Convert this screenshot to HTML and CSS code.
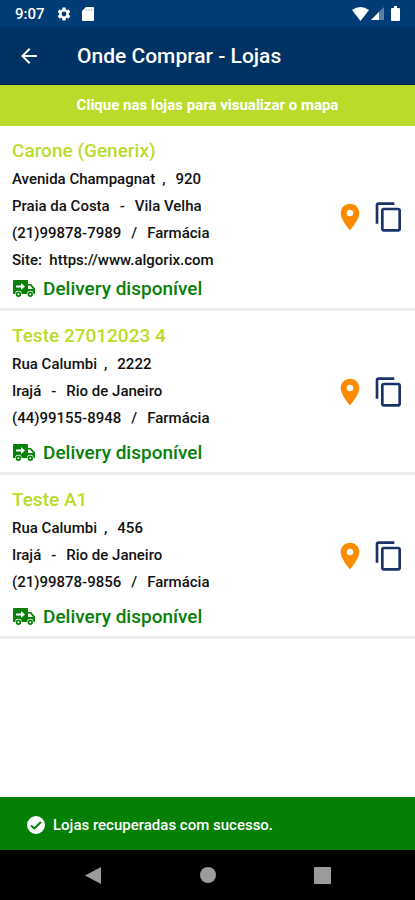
FILE: index.html
```html
<!DOCTYPE html>
<html lang="pt-BR">
<head>
<meta charset="utf-8">
<meta name="viewport" content="width=device-width, initial-scale=1">
<title>Onde Comprar - Lojas</title>
<link rel="stylesheet" href="styles.css">
</head>
<body>
<svg class="defs" aria-hidden="true">
  <symbol id="pin" viewBox="0 0 24 24"><path d="M12 2C8.130 2 5 5.130 5 9c0 5.250 7 13 7 13s7-7.750 7-13c0-3.870-3.130-7-7-7zm0 9.500a2.500 2.500 0 0 1 0-5 2.500 2.500 0 0 1 0 5z"/></symbol>
  <symbol id="copy" viewBox="0 0 24 24"><path d="M16 1H4c-1.100 0-2 .9-2 2v14h2V3h12V1zm3 4H8c-1.100 0-2 .9-2 2v14c0 1.100.9 2 2 2h11c1.100 0 2-.9 2-2V7c0-1.100-.9-2-2-2zm0 16H8V7h11v14z"/></symbol>
  <symbol id="truck" viewBox="0 0 24 20"><path fill-rule="evenodd" d="M2 1h13a1 1 0 0 1 1 1v3h3l4 4.500V15h-1.500a3.200 3.200 0 0 0-6.400 0H9.600a3.200 3.200 0 0 0-6.400 0H1V2a1 1 0 0 1 1-1zm14 5.500V10h5l-3-3.500zM9 4v2.500H4v2h5V11l4-3.500z"/><path fill-rule="evenodd" d="M6.400 12.500a2.700 2.700 0 1 1 0 5.400 2.700 2.700 0 0 1 0-5.400zm0 1.700a1 1 0 1 0 0 2 1 1 0 0 0 0-2zM18.300 12.500a2.700 2.700 0 1 1 0 5.400 2.700 2.700 0 0 1 0-5.400zm0 1.700a1 1 0 1 0 0 2 1 1 0 0 0 0-2z"/></symbol>
</svg>
<div class="screen">
  <div class="status">
    <span class="time">9:07</span>
    <svg class="gear" viewBox="0 0 24 24"><path d="M19.140 12.940c.04-.3.060-.61.060-.94 0-.32-.02-.64-.07-.94l2.030-1.580a.49.49 0 0 0 .12-.61l-1.920-3.320a.49.49 0 0 0-.59-.22l-2.390.96a7 7 0 0 0-1.620-.94l-.36-2.540a.48.48 0 0 0-.48-.41h-3.840a.48.48 0 0 0-.47.41l-.36 2.540c-.59.24-1.130.57-1.620.94l-2.390-.96a.48.48 0 0 0-.59.22L2.740 8.870a.48.48 0 0 0 .12.610l2.030 1.580c-.05.3-.09.630-.09.940s.02.640.07.940l-2.030 1.580a.49.49 0 0 0-.12.610l1.920 3.320c.12.220.37.290.59.220l2.390-.96c.5.380 1.030.7 1.620.94l.36 2.540c.05.240.24.410.48.410h3.840c.24 0 .44-.17.470-.41l.36-2.540c.59-.24 1.130-.56 1.620-.94l2.390.96c.22.080.47 0 .59-.22l1.920-3.320a.48.48 0 0 0-.12-.61zM12 15.600a3.600 3.600 0 1 1 0-7.200 3.600 3.600 0 0 1 0 7.200z"/></svg>
    <svg class="sd" viewBox="0 0 12 14"><path d="M4 0h7a1 1 0 0 1 1 1v12a1 1 0 0 1-1 1H1a1 1 0 0 1-1-1V4z"/><path class="slots" d="M4 2h1v2H4zM6.500 2h1v2h-1zM9 2h1v2H9z"/></svg>
    <span class="spacer"></span>
    <svg class="wifi" viewBox="0 0 17 14"><path d="M0 3Q8.500-3 17 3L8.500 14z"/></svg>
    <svg class="signal" viewBox="0 0 13 13"><path class="dim" d="M13 0v13H0z"/><path d="M8 5v8H0z"/></svg>
    <svg class="battery" viewBox="0 0 9 15"><path d="M3 0h3v2h2a1 1 0 0 1 1 1v11a1 1 0 0 1-1 1H1a1 1 0 0 1-1-1V3a1 1 0 0 1 1-1h2z"/></svg>
  </div>
  <header class="appbar">
    <button class="icon-button" type="button" aria-label="Voltar"><svg class="back" viewBox="0 0 24 24"><path d="M20 11H7.830l5.590-5.590L12 4l-8 8 8 8 1.410-1.410L7.830 13H20z"/></svg></button>
    <h1>Onde Comprar - Lojas</h1>
  </header>
  <p class="banner">Clique nas lojas para visualizar o mapa</p>
  <main>
    <article class="store">
      <div class="info">
        <h2>Carone (Generix)</h2>
        <p><span>Avenida Champagnat</span><span class="comma">,</span><span>920</span></p>
        <p><span>Praia da Costa</span><span class="sep">-</span><span>Vila Velha</span></p>
        <p><span>(21)99878-7989</span><span class="sep">/</span><span>Farmácia</span></p>
        <p>Site:&nbsp; https://www.algorix.com</p>
        <div class="delivery"><svg viewBox="0 0 24 20"><use href="#truck"/></svg>Delivery disponível</div>
      </div>
      <div class="actions">
        <button class="icon-button pin" type="button" aria-label="Ver no mapa"><svg><use href="#pin"/></svg></button>
        <button class="icon-button copy" type="button" aria-label="Copiar"><svg><use href="#copy"/></svg></button>
      </div>
    </article>
    <article class="store no-site">
      <div class="info">
        <h2>Teste 27012023 4</h2>
        <p><span>Rua Calumbi</span><span class="comma">,</span><span>2222</span></p>
        <p><span>Irajá</span><span class="sep">-</span><span>Rio de Janeiro</span></p>
        <p><span>(44)99155-8948</span><span class="sep">/</span><span>Farmácia</span></p>
        <div class="delivery"><svg viewBox="0 0 24 20"><use href="#truck"/></svg>Delivery disponível</div>
      </div>
      <div class="actions">
        <button class="icon-button pin" type="button" aria-label="Ver no mapa"><svg><use href="#pin"/></svg></button>
        <button class="icon-button copy" type="button" aria-label="Copiar"><svg><use href="#copy"/></svg></button>
      </div>
    </article>
    <article class="store no-site">
      <div class="info">
        <h2>Teste A1</h2>
        <p><span>Rua Calumbi</span><span class="comma">,</span><span>456</span></p>
        <p><span>Irajá</span><span class="sep">-</span><span>Rio de Janeiro</span></p>
        <p><span>(21)99878-9856</span><span class="sep">/</span><span>Farmácia</span></p>
        <div class="delivery"><svg viewBox="0 0 24 20"><use href="#truck"/></svg>Delivery disponível</div>
      </div>
      <div class="actions">
        <button class="icon-button pin" type="button" aria-label="Ver no mapa"><svg><use href="#pin"/></svg></button>
        <button class="icon-button copy" type="button" aria-label="Copiar"><svg><use href="#copy"/></svg></button>
      </div>
    </article>
  </main>
  <div class="toast" role="status">
    <svg viewBox="0 0 18 18"><circle cx="9" cy="9" r="9"/><path d="M4 9.500l3.300 3L14 6"/></svg>
    Lojas recuperadas com sucesso.
  </div>
  <nav class="navbar">
    <button class="icon-button" type="button" aria-label="Voltar"><svg viewBox="0 0 18 18"><path d="M16 1v17L0 9.500z"/></svg></button>
    <button class="icon-button" type="button" aria-label="Início"><svg viewBox="0 0 18 18"><circle cx="9" cy="9" r="8"/></svg></button>
    <button class="icon-button" type="button" aria-label="Recentes"><svg viewBox="0 0 18 18"><rect x="1" y="1" width="17" height="17" rx="1"/></svg></button>
  </nav>
</div>
</body>
</html>
```
FILE: styles.css
```css
* {
  box-sizing: border-box;
}

body,
h1,
h2,
p {
  margin: 0;
}

body {
  font-family: Roboto, sans-serif;
  font-weight: 500;
  background: #fff;
}

svg {
  display: block;
  flex: none;
  fill: currentColor;
}

.defs {
  position: absolute;
  width: 0;
  height: 0;
}

.screen {
  display: flex;
  flex-direction: column;
  min-height: 100vh;
}

.status {
  display: flex;
  align-items: center;
  height: 27px;
  padding: 0 15px;
  background: #023c77;
  color: #fff;
}

.time {
  font-size: 15px;
}

.gear {
  width: 16px;
  height: 16px;
  margin: 0 10px 0 11px;
}

.sd {
  width: 12px;
  height: 14px;
}

.slots {
  fill: #a9b9cc;
}

.spacer {
  flex: 1;
}

.wifi {
  width: 17px;
  height: 14px;
}

.signal {
  width: 13px;
  height: 13px;
  margin: 0 7px 0 2px;
}

.dim {
  opacity: 0.35;
}

.battery {
  width: 9px;
  height: 15px;
}

.icon-button {
  display: flex;
  align-items: center;
  justify-content: center;
  padding: 0;
  border: 0;
  background: none;
  color: inherit;
}

.appbar {
  display: flex;
  align-items: center;
  gap: 36px;
  height: 58px;
  padding: 0 17px;
  background: #003263;
  border-bottom: 1px solid #001b55;
  color: #fff;
}

.back {
  width: 24px;
  height: 24px;
}

h1 {
  font-size: 21px;
  line-height: 32px;
  font-weight: 500;
}

.banner {
  background: #bbdb2b;
  color: #fff;
  font-size: 15px;
  font-weight: 700;
  line-height: 41px;
  text-align: center;
}

main {
  flex: 1;
}

.store {
  display: flex;
  align-items: center;
  padding: 9px 10px 4px 12px;
  border-bottom: 3px solid #ededee;
}

.info {
  flex: 1;
}

h2 {
  color: #bbdb2b;
  font-size: 19px;
  font-weight: 500;
  line-height: 31px;
}

.info p {
  font-size: 15px;
  line-height: 27px;
  color: #111;
}

.comma {
  margin: 0 10px 0 7px;
}

.sep {
  margin: 0 10px;
}

.delivery {
  display: flex;
  align-items: center;
  gap: 7px;
  color: #078007;
  font-size: 19px;
  line-height: 30px;
}

.delivery svg {
  width: 24px;
  height: 20px;
}

.no-site .delivery {
  margin-top: 6px;
}

.actions {
  display: flex;
  align-items: center;
  gap: 7px;
  padding-bottom: 5px;
}

.pin {
  color: #fb8c00;
}

.copy {
  color: #1b3468;
}

.actions svg {
  width: 32px;
  height: 32px;
}

.toast {
  display: flex;
  align-items: center;
  gap: 8px;
  height: 53px;
  padding: 3px 27px 0;
  background: #048004;
  color: #fff;
  font-size: 15px;
}

.toast svg {
  width: 18px;
  height: 18px;
}

.toast path {
  fill: none;
  stroke: #048004;
  stroke-width: 2;
}

.navbar {
  display: flex;
  align-items: center;
  justify-content: center;
  gap: 96px;
  height: 50px;
  background: #000;
  color: #9c9c9c;
}

.navbar svg {
  width: 18px;
  height: 18px;
}
```
